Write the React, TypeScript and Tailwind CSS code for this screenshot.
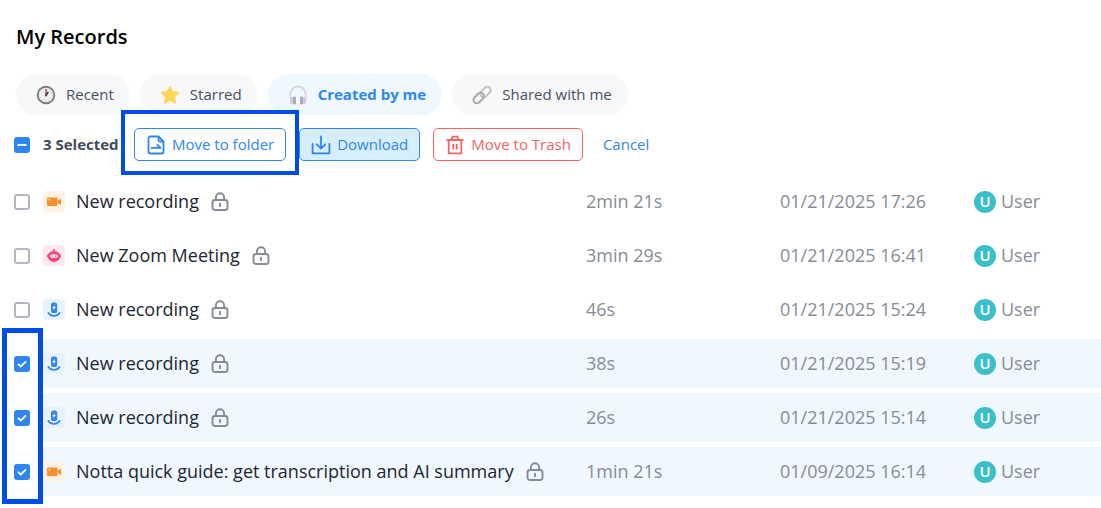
import { useState, type ReactNode } from "react"
import { clsx } from "clsx"

type Kind = "video" | "bot" | "mic"

const records: { id: number; kind: Kind; title: string; length: string; date: string }[] = [
  { id: 1, kind: "video", title: "New recording", length: "2min 21s", date: "01/21/2025 17:26" },
  { id: 2, kind: "bot", title: "New Zoom Meeting", length: "3min 29s", date: "01/21/2025 16:41" },
  { id: 3, kind: "mic", title: "New recording", length: "46s", date: "01/21/2025 15:24" },
  { id: 4, kind: "mic", title: "New recording", length: "38s", date: "01/21/2025 15:19" },
  { id: 5, kind: "mic", title: "New recording", length: "26s", date: "01/21/2025 15:14" },
  {
    id: 6,
    kind: "video",
    title: "Notta quick guide: get transcription and AI summary",
    length: "1min 21s",
    date: "01/09/2025 16:14",
  },
]

function ClockIcon() {
  return (
    <svg viewBox="0 0 20 20" className="size-5">
      <circle cx="10" cy="10" r="8.3" fill="#f1f2f3" stroke="#7d7d7d" strokeWidth="1.9" />
      <circle cx="10" cy="10" r="6" fill="none" stroke="#b5b5b5" strokeWidth="1" strokeDasharray="0.8 2.34" />
      <path d="M10 10.5V4" stroke="#c83c5c" strokeWidth="1.5" />
      <path d="M10 10.5l2.3-3.6" stroke="#3c3c3c" strokeWidth="1.6" />
      <circle cx="10" cy="10.4" r="1" fill="#3c3c3c" />
    </svg>
  )
}

function StarIcon() {
  return (
    <svg viewBox="0 0 20 20" className="size-5">
      <path
        d="M10 2.2l2.4 4.7 6 .7-4.4 4 1.200 6L10 14.800 4.800 17.600l1.200-6L1.600 7.600l6-.7z"
        fill="#fdd754"
        stroke="#fdd754"
        strokeWidth="1.800"
        strokeLinejoin="round"
      />
    </svg>
  )
}

function HeadphonesIcon() {
  return (
    <svg viewBox="0 0 20 20" className="size-5">
      <path d="M3.300 16.500C.6 9 3.500 1.500 10 1.500S19.400 9 16.700 16.500" fill="none" stroke="#dcd6e4" strokeWidth="1.8" />
      <rect x="2" y="12" width="3.200" height="7" rx="1.400" fill="#d0cadb" />
      <rect x="5" y="11.500" width="3" height="8" rx="1.300" fill="#b0a8bd" />
      <rect x="14.800" y="12" width="3.200" height="7" rx="1.400" fill="#d0cadb" />
      <rect x="12" y="11.500" width="3" height="8" rx="1.300" fill="#b0a8bd" />
    </svg>
  )
}

function ChainIcon() {
  return (
    <svg viewBox="0 0 20 20" className="size-5" fill="none" strokeWidth="2">
      <rect x="7.500" y="3.600" width="12" height="6.800" rx="3.400" transform="rotate(-45 13.500 7)" stroke="#c4c4c4" />
      <rect x="0.700" y="9.600" width="12" height="6.800" rx="3.400" transform="rotate(-45 6.700 13)" stroke="#a9a9a9" />
    </svg>
  )
}

function MoveIcon() {
  return (
    <svg viewBox="-1 0 20 20" className="size-5" fill="none" stroke="currentColor" strokeWidth="1.8" strokeLinejoin="round">
      <path d="M11.500 1.500H3.500a2 2 0 0 0-2 2v13a2 2 0 0 0 2 2h11a2 2 0 0 0 2-2V6.500z" />
      <path d="M11.500 1.500v3.500a1.500 1.500 0 0 0 1.500 1.500h3.500" />
      <path d="M4.500 12.800h9L10.300 10" strokeLinecap="round" />
    </svg>
  )
}

function DownloadIcon() {
  return (
    <svg viewBox="0 0 20 20" className="size-5" fill="none" stroke="currentColor" strokeWidth="1.8" strokeLinecap="round" strokeLinejoin="round">
      <path d="M10 1.500v12M5.700 9.300L10 13.600l4.300-4.300M1.600 9v9.300h16.800V9" />
    </svg>
  )
}

function TrashIcon() {
  return (
    <svg viewBox="0 0 20 20" className="size-5" fill="none" stroke="currentColor" strokeWidth="1.8" strokeLinejoin="round">
      <path d="M1.500 5h17M3.700 5v13.300h12.600V5M6.300 5l1.200-3.300h5L13.700 5M8.300 9v5.500M11.700 9v5.500" />
    </svg>
  )
}

function LockIcon() {
  return (
    <svg viewBox="0 0 18 20" className="h-5 w-[18px] shrink-0" fill="none" stroke="#868c96" strokeWidth="1.900" strokeLinecap="round">
      <rect x="1.500" y="8" width="15" height="10" rx="2.500" />
      <path d="M4.900 8V5.300a4.100 4.100 0 0 1 8.200 0V8M9 11.800v2.400" />
    </svg>
  )
}

function KindIcon({ kind }: { kind: Kind }) {
  if (kind === "video") {
    return (
      <span className="flex h-[21px] w-[22px] shrink-0 items-center justify-center rounded-[4px] bg-[#fef2e7]">
        <svg viewBox="0 0 14 10" className="h-[10px] w-[14px]" fill="#f5902a">
          <rect x="0" y="0.500" width="10.500" height="8.500" rx="1" />
          <path d="M10.500 3.800L14 1.500v6.500l-3.500-2.300z" />
          <circle cx="2.500" cy="2.800" r=".8" fill="#fff" />
        </svg>
      </span>
    )
  }
  if (kind === "bot") {
    return (
      <span className="flex h-[21px] w-[22px] shrink-0 items-center justify-center rounded-[4px] bg-[#ffe7ee]">
        <svg viewBox="0 0 14 14" className="size-[14px]" fill="#f7457c">
          <rect x="6.500" y="0" width="1" height="3" />
          <circle cx="7" cy=".9" r=".9" />
          <path d="M7 2.200c4 0 6 2 6 5s-2 5-4.500 5L7 13.600 5.500 12.200C3 12.200 1 10.200 1 7.200s2-5 6-5z" />
          <rect x="0" y="5.500" width="14" height="3" rx="1" />
          <rect x="3" y="5.500" width="8" height="3.200" rx="1.600" fill="#fff" />
          <circle cx="5.200" cy="7.100" r=".8" />
          <circle cx="8.800" cy="7.100" r=".8" />
        </svg>
      </span>
    )
  }
  return (
    <span className="flex h-[21px] w-[22px] shrink-0 items-center justify-center rounded-[4px] bg-[#e8f1fe]">
      <svg viewBox="0 0 14 16" className="h-4 w-[14px]">
        <rect x="4" y="0.500" width="6.200" height="10.500" rx="2.600" fill="#2f86f0" />
        <path d="M7.700 2.800L5.300 6.300h1.400L6.300 8.500l2.500-3.400H7.300z" fill="#fff" />
        <path d="M1.200 10.800c2.800 4.300 8.800 4.300 11.600 0" fill="none" stroke="#2f86f0" strokeWidth="1.600" strokeLinecap="round" />
      </svg>
    </span>
  )
}

function Checkbox({
  label,
  checked,
  dash,
  onChange,
}: {
  label: string
  checked: boolean
  dash?: boolean
  onChange: () => void
}) {
  return (
    <span className="grid size-4 shrink-0 place-items-center">
      <input
        type="checkbox"
        aria-label={label}
        checked={checked}
        onChange={onChange}
        className="col-start-1 row-start-1 size-4 appearance-none rounded-[3px] border-2 border-[#b1b6c0] bg-white checked:border-[#2f86f0] checked:bg-[#2f86f0]"
      />
      {checked && (
        <svg viewBox="0 0 10 10" className="pointer-events-none col-start-1 row-start-1 size-[10px]" fill="none" stroke="#fff" strokeWidth="1.800">
          <path d={dash ? "M.5 5h9" : "M1 4.800l2.800 2.700L9 2.300"} />
        </svg>
      )}
    </span>
  )
}

const tabs: { name: string; icon: ReactNode }[] = [
  { name: "Recent", icon: <ClockIcon /> },
  { name: "Starred", icon: <StarIcon /> },
  { name: "Created by me", icon: <HeadphonesIcon /> },
  { name: "Shared with me", icon: <ChainIcon /> },
]

const actionButton = "flex h-[33px] items-center gap-[6px] rounded-[5px] border px-[11px]"

export default function App() {
  const [tab, setTab] = useState("Created by me")
  const [selected, setSelected] = useState([4, 5, 6])

  const toggle = (id: number) =>
    setSelected(selected.includes(id) ? selected.filter((s) => s !== id) : [...selected, id])

  const toggleAll = () => setSelected(selected.length ? [] : records.map((r) => r.id))

  return (
    <main className="bg-white pt-6 pb-2 font-['Open_Sans',sans-serif] whitespace-nowrap">
      <h1 className="px-4 text-[20px] leading-[26px] font-semibold text-black">My Records</h1>

      {/* Tabs */}
      <nav className="mt-6 flex gap-[10px] px-4">
        {tabs.map((t) => (
          <button
            key={t.name}
            type="button"
            onClick={() => setTab(t.name)}
            className={clsx(
              "flex h-[41px] items-center gap-[10px] rounded-full pr-4 pl-5 text-[15px]",
              tab === t.name ? "bg-[#eff8ff] font-bold text-[#2f86f0]" : "bg-[#f7f8fa] text-[#47505c]"
            )}
          >
            {t.icon}
            {t.name}
          </button>
        ))}
      </nav>

      {/* Bulk actions */}
      <div className="mt-[13px] flex items-center text-[15px] text-[#2f86f0]">
        <div className="flex items-center gap-[13px] pl-[14px]">
          <Checkbox label="Select all records" checked={selected.length > 0} dash onChange={toggleAll} />
          <span className="w-[78px] font-bold text-[#414b58]">{selected.length} Selected</span>
        </div>
        <div className="relative mr-[13px] ml-[13px]">
          <button type="button" className={clsx(actionButton, "border-[#2f86f0]")}>
            <MoveIcon />
            Move to folder
          </button>
          <span className="pointer-events-none absolute -inset-x-[13px] -top-[18px] -bottom-[14px] border-4 border-[#004de6]" />
        </div>
        <button type="button" className={clsx(actionButton, "border-[#2f86f0] bg-[#d7eefe]")}>
          <DownloadIcon />
          Download
        </button>
        <button type="button" className={clsx(actionButton, "ml-[13px] border-[#f26461] text-[#f26461]")}>
          <TrashIcon />
          Move to Trash
        </button>
        <button type="button" className="ml-5">
          Cancel
        </button>
      </div>

      {/* Records */}
      <div className="relative mt-[11px]">
        <table className="w-full table-fixed border-separate border-spacing-x-0 border-spacing-y-[5px] text-[18px] text-[#868d96]">
          <colgroup>
            <col className="w-[43px]" />
            <col />
            <col className="w-[194px]" />
            <col className="w-[194px]" />
            <col className="w-[127px]" />
          </colgroup>
          <tbody>
            {records.map((r) => {
              const on = selected.includes(r.id)
              const bg = on && "bg-[#f0f7ff]"
              return (
                <tr key={r.id} className="h-[49px]">
                  <td className="pl-[14px]">
                    <Checkbox label={`Select ${r.title}`} checked={on} onChange={() => toggle(r.id)} />
                  </td>
                  <td className={clsx("rounded-l-[4px]", bg)}>
                    <div className="flex items-center">
                      <KindIcon kind={r.kind} />
                      <span className="mr-3 ml-[11px] text-[#1c2632]">{r.title}</span>
                      <LockIcon />
                    </div>
                  </td>
                  <td className={clsx(bg)}>{r.length}</td>
                  <td className={clsx(bg)}>{r.date}</td>
                  <td className={clsx(bg)}>
                    <div className="flex items-center gap-[5px]">
                      <span className="flex size-[22px] items-center justify-center rounded-full bg-[#3bc0c9] text-[15px] font-semibold text-white">
                        U
                      </span>
                      User
                    </div>
                  </td>
                </tr>
              )
            })}
          </tbody>
        </table>
        <span className="pointer-events-none absolute -bottom-[3px] left-[2px] h-44 w-[41px] border-[5px] border-[#004de6]" />
      </div>
    </main>
  )
}
